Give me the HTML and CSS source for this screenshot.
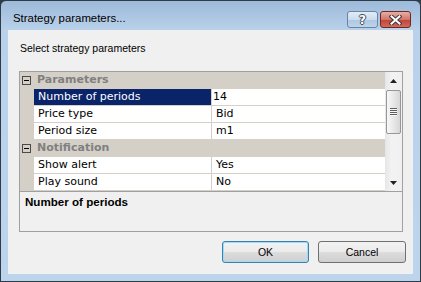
FILE: index.html
```html
<!DOCTYPE html>
<html>
<head>
  <title>Strategy parameters...</title>
  <link rel="stylesheet" href="styles.css">
</head>
<body>
<div class="window">
  <div class="titlebar">
    <span class="title">Strategy parameters...</span>
    <div class="caption">
      <span class="cbtn help">?</span>
      <span class="cbtn close">
        <svg width="13" height="10" viewBox="0 0 13 10">
          <path d="M2.5 1.5l8 7M10.5 1.5l-8 7" stroke="#3b3b3b" stroke-width="4" stroke-linecap="square" fill="none"/>
          <path d="M2.5 1.5l8 7M10.5 1.5l-8 7" stroke="#fff" stroke-width="2" stroke-linecap="square" fill="none"/>
        </svg>
      </span>
    </div>
  </div>

  <div class="client">
    <div class="prompt">Select strategy parameters</div>

    <div class="grid">
      <div class="rows">
        <div class="row cat">
          <span class="margin"><span class="toggle"></span></span>
          <span class="cat-name">Parameters</span>
        </div>
        <div class="row sel">
          <span class="margin"></span>
          <span class="name">Number of periods</span>
          <span class="value edit">14</span>
        </div>
        <div class="row">
          <span class="margin"></span>
          <span class="name">Price type</span>
          <span class="value">Bid</span>
        </div>
        <div class="row">
          <span class="margin"></span>
          <span class="name">Period size</span>
          <span class="value">m1</span>
        </div>
        <div class="row cat">
          <span class="margin"><span class="toggle"></span></span>
          <span class="cat-name">Notification</span>
        </div>
        <div class="row">
          <span class="margin"></span>
          <span class="name">Show alert</span>
          <span class="value">Yes</span>
        </div>
        <div class="row">
          <span class="margin"></span>
          <span class="name">Play sound</span>
          <span class="value">No</span>
        </div>
      </div>

      <div class="scrollbar">
        <div class="arrow">
          <svg width="7" height="4" viewBox="0 0 7 4"><path d="M0 4h7L3.5 0z" fill="#222"/></svg>
        </div>
        <div class="thumb"><span class="grip"></span></div>
        <div class="track"></div>
        <div class="arrow">
          <svg width="7" height="4" viewBox="0 0 7 4"><path d="M0 0h7L3.5 4z" fill="#222"/></svg>
        </div>
      </div>
    </div>

    <div class="desc">Number of periods</div>

    <div class="buttons">
      <button class="btn default">OK</button>
      <button class="btn cancel">Cancel</button>
    </div>
  </div>
</div>
</body>
</html>
```

FILE: styles.css
```css
body {
  margin: 0;
  background: #2f3b46;
  font-family: "Liberation Sans", Arial, sans-serif;
}

.window {
  width: 421px;
  height: 282px;
  box-sizing: border-box;
  border: 1px solid #2f3b46;
  border-radius: 6px 6px 0 0;
  background: linear-gradient(#9dbad9, #b9d1ea 29px, #bcd4ec);
  padding: 0 7px 7px;
  display: flex;
  flex-direction: column;
}

/* title bar */
.titlebar {
  height: 29px;
  display: flex;
  flex: none;
}

.title {
  flex: 1;
  padding: 5px 0 0 5px;
  line-height: 24px;
  font-size: 11.4px;
  color: #000;
}

.caption {
  display: flex;
  gap: 2px;
  margin: 10px 2px 0 0;
}

.cbtn {
  width: 31px;
  height: 17px;
  box-sizing: border-box;
  border: 1px solid #6a84a4;
  border-radius: 3px;
  display: flex;
  align-items: center;
  justify-content: center;
}

.help {
  background: linear-gradient(#e3ecf7, #cbdbee 50%, #aec6e3 51%, #bed4ec);
  color: #fff;
  font-family: "DejaVu Sans", sans-serif;
  font-weight: bold;
  font-size: 12px;
  text-shadow: 1px 0 #3d4a5a, -1px 0 #3d4a5a, 0 1px #3d4a5a, 0 -1px #3d4a5a;
}

.close {
  border-color: #6e2a22;
  background: linear-gradient(#e8aea5, #d47468 50%, #c24434 51%, #d0685a);
}

/* client area */
.client {
  flex: 1;
  background: #f0f0f0;
  padding: 11px 0 0 11px;
}

.prompt {
  font-size: 10.5px;
  line-height: 14px;
  height: 14px;
  padding-left: 1px;
}

/* property grid */
.grid {
  margin-top: 16px;
  width: 384px;
  box-sizing: border-box;
  border: 1px solid #a0a0a0;
  display: flex;
}

.rows {
  flex: 1;
}

.row {
  display: flex;
  height: 16px;
  border-bottom: 1px solid #d4d0c8;
  font-family: "DejaVu Sans", sans-serif;
  font-size: 11px;
  line-height: 16px;
  background: #fff;
  white-space: nowrap;
}

.margin {
  width: 14px;
  flex: none;
  background: #d4d0c8;
}

.toggle {
  width: 9px;
  height: 9px;
  box-sizing: border-box;
  border: 1px solid #4a4a4a;
  margin: 4px 0 0 2px;
  display: flex;
  align-items: center;
  justify-content: center;
}

.toggle::after {
  content: "";
  width: 5px;
  height: 1px;
  background: #000;
}

.name {
  width: 178px;
  box-sizing: border-box;
  padding-left: 4px;
  border-right: 1px solid #d4d0c8;
}

.value {
  flex: 1;
  padding-left: 4px;
}

.value.edit {
  padding-left: 1px;
}

.row.cat {
  background: #d4d0c8;
}

.cat-name {
  padding-left: 3px;
  font-weight: bold;
  color: #808080;
}

.row.sel .name {
  background: #0a246a;
  color: #fff;
}

/* scrollbar */
.scrollbar {
  width: 17px;
  flex: none;
  display: flex;
  flex-direction: column;
  background: linear-gradient(90deg, #e6e6e6, #f3f3f3 40%, #f0f0f0);
}

.arrow {
  height: 17px;
  display: flex;
  align-items: center;
  justify-content: center;
}

.thumb {
  height: 44px;
  margin: 1px 1px 0;
  box-sizing: border-box;
  border: 1px solid #979797;
  border-radius: 2px;
  background: linear-gradient(90deg, #f7f7f7, #e8e8e8 50%, #d6d6d6);
  display: flex;
  align-items: center;
  justify-content: center;
}

.grip {
  width: 7px;
  height: 8px;
  background: repeating-linear-gradient(#5e5e5e 0 1px, #f8f8f8 1px 2px);
}

.track {
  flex: 1;
}

/* description panel */
.desc {
  width: 384px;
  height: 40px;
  box-sizing: border-box;
  border: 1px solid #a0a0a0;
  border-top: 0;
  padding: 3px 0 0 5px;
  font-weight: bold;
  font-size: 11.6px;
  line-height: 14px;
}

/* dialog buttons */
.buttons {
  width: 387px;
  display: flex;
  justify-content: flex-end;
  gap: 9px;
  margin-top: 9px;
}

.btn {
  width: 88px;
  height: 22px;
  box-sizing: border-box;
  padding: 0;
  border: 1px solid #707070;
  border-radius: 3px;
  background: linear-gradient(#f2f2f2, #ebebeb 50%, #dddddd 50%, #cfcfcf);
  font-family: "Liberation Sans", Arial, sans-serif;
  font-size: 10.5px;
  color: #000;
}

.btn.default {
  width: 87px;
  border-color: #3c7fb1;
  box-shadow: inset 0 0 0 1px #9fdcf5;
}
```
